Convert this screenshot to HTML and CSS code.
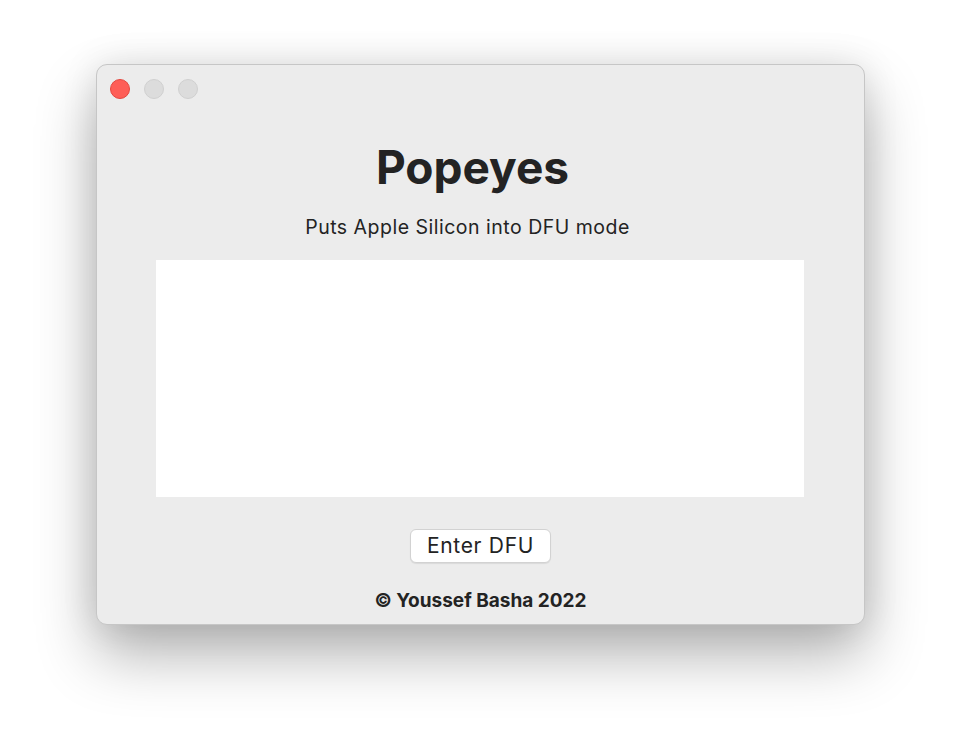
FILE: index.html
```html
<!DOCTYPE html>
<html lang="en">
<head>
  <meta charset="UTF-8">
  <meta name="viewport" content="width=device-width, initial-scale=1.0">
  <title>Popeyes</title>
  <link rel="stylesheet" href="styles.css">
</head>
<body>
  <div class="window">
    <div class="titlebar">
      <span class="light close"></span>
      <span class="light"></span>
      <span class="light"></span>
    </div>

    <h1 class="title">Popeyes</h1>
    <p class="subtitle">Puts Apple Silicon into DFU mode</p>

    <div class="log"></div>

    <button type="button" class="dfu-button">Enter DFU</button>

    <p class="credit">© Youssef Basha 2022</p>
  </div>
</body>
</html>
```

FILE: styles.css
```css
html, body {
  margin: 0;
  background: #ffffff;
}
body {
  min-height: 752px;
  box-sizing: border-box;
  padding: 64px 0 0 96px;
  font-family: Inter, "Liberation Sans", sans-serif;
  color: #232323;
}
.window {
  box-sizing: border-box;
  width: 769px;
  height: 561px;
  background: #ececec;
  border: 1px solid #c6c6c6;
  border-radius: 11px;
  box-shadow: 0 30px 60px rgba(0, 0, 0, 0.3), 0 0 36px rgba(0, 0, 0, 0.1);
  display: flex;
  flex-direction: column;
  align-items: center;
}
.titlebar {
  align-self: stretch;
  height: 47px;
  display: flex;
  align-items: center;
  gap: 14px;
  padding: 0 13px;
}
.light {
  box-sizing: border-box;
  width: 20px;
  height: 20px;
  border-radius: 50%;
  background: #dcdcdc;
  border: 1px solid #d0d0d0;
}
.light.close {
  background: #fe5e57;
  border-color: #e4473f;
}
.title {
  margin: 29px 16px 0 0;
  font-size: 46px;
  line-height: 52px;
  font-weight: 700;
}
.subtitle {
  margin: 22px 26px 0 0;
  font-size: 19.5px;
  line-height: 24px;
  letter-spacing: 0.5px;
}
.log {
  margin: 21px 2px 0 0;
  width: 648px;
  height: 237px;
  background: #ffffff;
}
.dfu-button {
  margin-top: 32px;
  width: 141px;
  height: 34px;
  padding: 0;
  background: #ffffff;
  border: 1px solid #d2d2d2;
  border-radius: 6px;
  box-shadow: 0 1px 1px rgba(0, 0, 0, 0.08);
  font-family: Inter, "Liberation Sans", sans-serif;
  font-size: 21px;
  line-height: 32px;
  letter-spacing: 0.7px;
  color: #232323;
  cursor: pointer;
}
.credit {
  margin: 26px 0 0 0;
  font-size: 19px;
  line-height: 24px;
  font-weight: 700;
}
```
